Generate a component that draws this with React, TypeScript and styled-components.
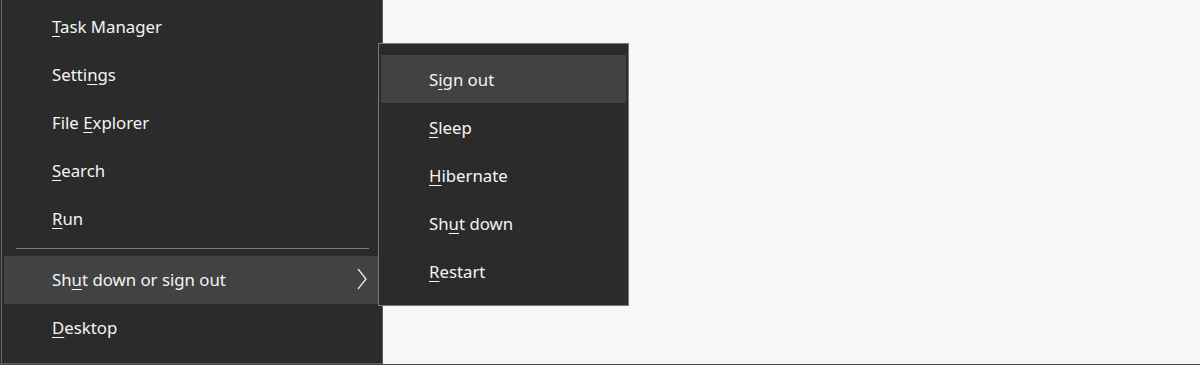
import React from 'react'
import styled, { createGlobalStyle } from 'styled-components'

const GlobalStyle = createGlobalStyle`
  html, body {
    margin: 0;
    padding: 0;
    background: #f7f7f7;
    font-family: "Noto Sans", "Open Sans", sans-serif;
  }
`;

const Screen = styled.div`
  width: 1200px;
  height: 365px;
  display: flex;
  flex-direction: column;
  overflow: hidden;
`;

const Desk = styled.div`
  flex: 1;
  display: flex;
  align-items: flex-start;
`;

const Taskbar = styled.div`
  height: 2px;
  background: #474747;
`;

const MainMenu = styled.ul`
  list-style: none;
  margin: 0;
  height: 360px;
  padding: 3px 0 0 4px;
  box-sizing: content-box;
  width: 378px;
  background: #2b2b2b;
  border-right: 1px solid #5c5c5c;
  border-bottom: 1px solid #5c5c5c;
  box-shadow: inset 1px 0 0 #2b2b2b, inset 2px 0 0 #6a6a6a;
`;

const SubMenu = styled.ul`
  list-style: none;
  margin: 43px 0 0 -5px;
  width: 249px;
  padding: 11px 0 10px 0;
  background: #2b2b2b;
  border: 1px solid #7a7a7a;
  position: relative;
  z-index: 2;
`;

const Item = styled.li<{ $active?: boolean; $sub?: boolean }>`
  height: 48px;
  margin: ${p => (p.$sub ? '0 2px' : '0')};
  padding-left: 48px;
  padding-right: 14px;
  padding-top: ${p => (p.$sub ? '1px' : '0')};
  padding-bottom: ${p => (p.$sub ? '0' : '2px')};
  display: flex;
  align-items: center;
  justify-content: space-between;
  background: ${p => (p.$active ? '#424242' : 'transparent')};
  color: #f4f4f4;
  font-size: 16.8px;
  white-space: nowrap;
  box-sizing: border-box;
`;

const Key = styled.span`
  text-decoration: underline;
  text-underline-offset: 3px;
  text-decoration-thickness: 1px;
`;

const Separator = styled.li`
  height: 13px;
  display: flex;
  align-items: flex-start;
  padding: 5px 13px 0 12px;
  box-sizing: border-box;

  &::after {
    content: '';
    flex: 1;
    height: 1px;
    background: #7c7c7c;
  }
`;

const Chevron = () => (
  <svg width="12" height="22" viewBox="0 0 12 22">
    <path d="M2 1 L10 11 L2 21" fill="none" stroke="#e8e8e8" strokeWidth="1.3" />
  </svg>
);

type Label = { pre?: string; k: string; post?: string };

const L = ({ pre = '', k, post = '' }: Label) => (
  <span>
    {pre}
    <Key>{k}</Key>
    {post}
  </span>
);

const App = () => {
  return (
    <Screen>
      <GlobalStyle />
      <Desk>
        <MainMenu>
          <Item><L k="T" post="ask Manager" /></Item>
          <Item><L pre="Setti" k="n" post="gs" /></Item>
          <Item><L pre="File " k="E" post="xplorer" /></Item>
          <Item><L k="S" post="earch" /></Item>
          <Item><L k="R" post="un" /></Item>
          <Separator />
          <Item $active>
            <L pre="Sh" k="u" post="t down or sign out" />
            <Chevron />
          </Item>
          <Item><L k="D" post="esktop" /></Item>
        </MainMenu>
        <SubMenu>
          <Item $sub $active><L pre="S" k="i" post="gn out" /></Item>
          <Item $sub><L k="S" post="leep" /></Item>
          <Item $sub><L k="H" post="ibernate" /></Item>
          <Item $sub><L pre="Sh" k="u" post="t down" /></Item>
          <Item $sub><L k="R" post="estart" /></Item>
        </SubMenu>
      </Desk>
      <Taskbar />
    </Screen>
  )
}

export default App
